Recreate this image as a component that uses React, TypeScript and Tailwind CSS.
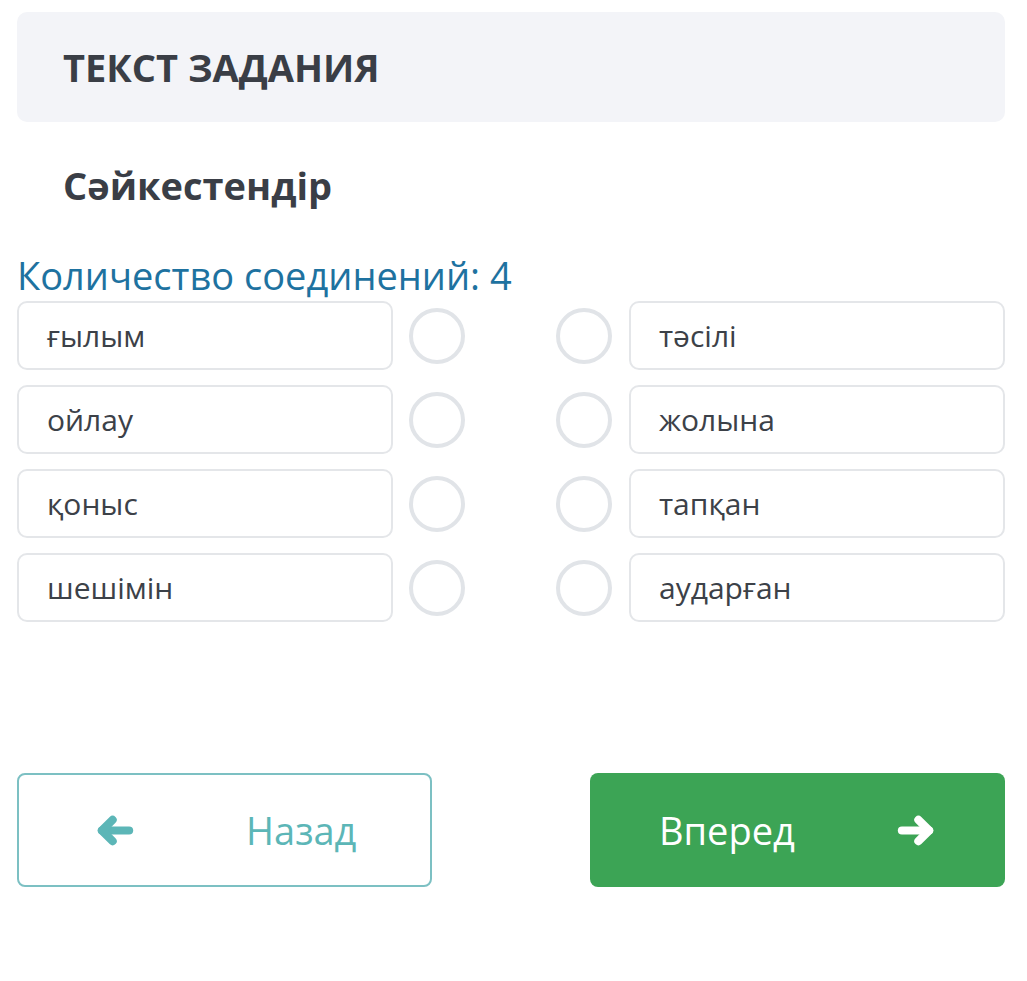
const left = ['ғылым', 'ойлау', 'қоныс', 'шешімін'];
const right = ['тәсілі', 'жолына', 'тапқан', 'аударған'];

const Option = ({ text }: { text: string }) => (
  <div className="flex h-[69px] w-[376px] items-center rounded-[10px] border-2 border-[#e4e6e9] pl-[28px] text-[30px] text-[#3c4148]">
    {text}
  </div>
);

const Dot = () => <div className="size-[56px] shrink-0 rounded-full border-[4px] border-[#e1e4e8]" />;

const Arrow = ({ flip }: { flip?: boolean }) => (
  <svg
    viewBox="0 0 40 32"
    className={flip ? 'h-[31px] w-[39px] -scale-x-100' : 'h-[31px] w-[39px]'}
    fill="none"
    stroke="currentColor"
    strokeWidth={8.5}
    strokeLinecap="round"
    strokeLinejoin="round"
  >
    <path d="M6 16H34" />
    <path d="M17 5L6 16L17 27" />
  </svg>
);

export default function App() {
  return (
    <div className="min-h-screen bg-white pt-[12px] pr-[22px] pl-[17px] font-['Open_Sans',sans-serif]">
      <div className="flex h-[110px] items-center rounded-[10px] bg-[#f3f4f8] pl-[46px]">
        <h1 className="text-[38px] font-bold text-[#3a3e46]">ТЕКСТ ЗАДАНИЯ</h1>
      </div>

      <h2 className="mt-[38px] pl-[46px] text-[38px] leading-[50px] font-bold text-[#3a3e46]">Сәйкестендір</h2>

      <div className="mt-[42px] text-[38px] leading-[46px] text-[#1e72a0]">Количество соединений: 4</div>

      <div className="mt-[3px] flex flex-col gap-[15px]">
        {left.map((l, i) => (
          <div key={l} className="flex items-center">
            <Option text={l} />
            <div className="ml-[16px]">
              <Dot />
            </div>
            <div className="flex-1" />
            <div className="mr-[17px]">
              <Dot />
            </div>
            <Option text={right[i]} />
          </div>
        ))}
      </div>

      <div className="mt-[151px] flex justify-between">
        <button
          type="button"
          className="flex h-[114px] w-[415px] items-center rounded-[8px] border-2 border-[#7cc0c3] pl-[77px] text-[38px] text-[#5cb6b7]"
        >
          <Arrow />
          <span className="ml-[111px]">Назад</span>
        </button>
        <button
          type="button"
          className="flex h-[114px] w-[415px] items-center rounded-[8px] bg-[#3ca455] pl-[69px] text-[38px] text-white"
        >
          <span>Вперед</span>
          <span className="ml-[101px]">
            <Arrow flip />
          </span>
        </button>
      </div>
    </div>
  );
}
